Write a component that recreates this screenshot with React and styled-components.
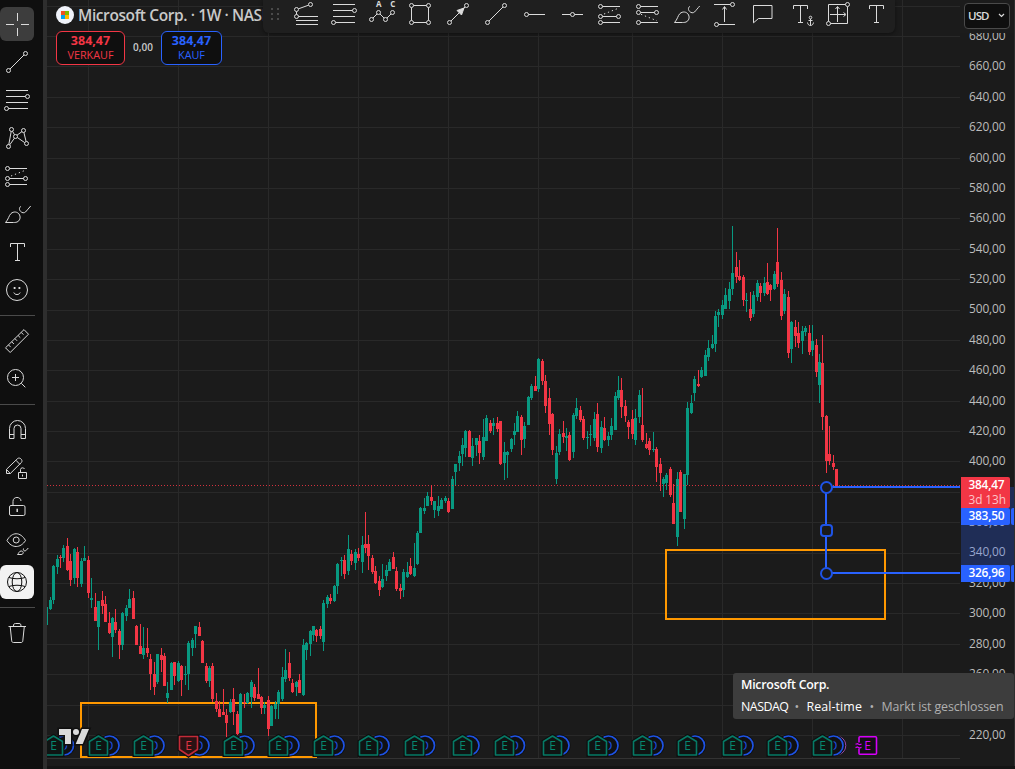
import React from "react";
import styled, { createGlobalStyle } from "styled-components";

const GlobalStyle = createGlobalStyle`
  * {
    box-sizing: border-box;
  }
  body {
    margin: 0;
    background: #1b1b1b;
    overflow: hidden;
    font-family: "Open Sans", "Noto Sans", sans-serif;
  }
`;

const Page = styled.div`
  display: flex;
  width: 1015px;
  height: 769px;
  overflow: hidden;
  background: #1b1b1b;
`;

const Sidebar = styled.div`
  width: 47px;
  flex-shrink: 0;
  padding-top: 7px;
  display: flex;
  flex-direction: column;
  align-items: flex-start;
  gap: 4px;
  background: #0f0f0f;
  border-right: 4px solid #2e2e2e;
`;

const SideButton = styled.div`
  width: 34px;
  height: 34px;
  display: flex;
  align-items: center;
  justify-content: center;
  border-radius: 6px;
  color: ${(p) => (p.$tone === "light" ? "#0f0f0f" : "#dbdbdb")};
  background: ${(p) =>
    p.$tone === "light" ? "#f2f2f2" : p.$tone === "dark" ? "#3d3d3d" : "none"};
`;

const Divider = styled.div`
  width: 35px;
  height: 1px;
  margin: 4px 0;
  background: #4a4a4a;
`;

const Svg = styled.svg`
  display: block;
  width: 28px;
  height: 28px;
  fill: none;
  stroke: currentColor;
  stroke-width: 1;
  overflow: visible;
`;

const ChartPane = styled.div`
  position: relative;
  width: 913px;
  height: 769px;
  flex-shrink: 0;
`;

const ChartSvg = styled.svg`
  position: absolute;
  left: 0;
  top: 0;
  width: 913px;
  height: 769px;
`;

const Legend = styled.div`
  position: relative;
  width: 216px;
  padding: 5px 0 0 9px;
  overflow: hidden;
`;

const TitleRow = styled.div`
  display: flex;
  align-items: center;
  height: 20px;
  gap: 4px;
`;

const LogoSvg = styled.svg`
  width: 18px;
  height: 18px;
  flex-shrink: 0;
`;

const Title = styled.div`
  font-size: 15.5px;
  font-weight: 600;
  letter-spacing: -0.4px;
  white-space: nowrap;
  color: #c9c9c9;
`;

const QuoteRow = styled.div`
  display: flex;
  align-items: center;
  margin-top: 6px;
`;

const QuoteButton = styled.div`
  width: ${(p) => p.$width}px;
  height: 34px;
  padding-top: 1px;
  display: flex;
  flex-direction: column;
  align-items: center;
  border: 1px solid ${(p) => p.$color};
  border-radius: 6px;
  background: #0f0f0f;
  color: ${(p) => p.$color};
`;

const QuotePrice = styled.div`
  font-size: 12.5px;
  line-height: 15px;
  font-weight: 700;
`;

const QuoteSide = styled.div`
  font-size: 10.8px;
  line-height: 14px;
`;

const Spread = styled.div`
  width: 36px;
  padding-bottom: 2px;
  text-align: center;
  font-size: 10px;
  font-weight: 600;
  color: #c9c9c9;
`;

const FloatingBar = styled.div`
  position: absolute;
  left: 216px;
  top: 0;
  width: 632px;
  height: 33px;
  display: flex;
  background: #1f1f1f;
  border-radius: 0 0 6px 6px;
  box-shadow: 0 1px 4px rgba(0, 0, 0, 0.45);
  color: #dbdbdb;
`;

const Grip = styled.div`
  width: 24px;
  padding: 8px 0 0 8px;
  display: grid;
  grid-template-columns: 2px 2px;
  grid-auto-rows: 2px;
  gap: 3px 4px;
`;

const GripDot = styled.div`
  background: #4a4a4a;
`;

const BarButton = styled.div`
  width: 38px;
  height: 28px;
  display: flex;
  justify-content: center;
`;

const Axis = styled.div`
  position: relative;
  width: 55px;
  flex-shrink: 0;
  overflow: hidden;
  border-right: 1px solid #2e2e2e;
`;

const AxisLabels = styled.div`
  display: flex;
  flex-direction: column;
  padding-top: 20px;
`;

const AxisLabel = styled.div`
  height: 30.39px;
  line-height: 30.39px;
  padding-left: 9px;
  flex-shrink: 0;
  font-size: 11.9px;
  letter-spacing: -0.1px;
  color: #bdbdbd;
`;

const Currency = styled.div`
  position: absolute;
  left: 4px;
  top: 3px;
  width: 46px;
  height: 26px;
  padding: 0 4px 1px 3px;
  display: flex;
  align-items: center;
  justify-content: space-between;
  border: 1px solid #4a4a4a;
  border-radius: 4px;
  background: #0f0f0f;
  color: #dbdbdb;
  font-size: 11.5px;
  font-weight: 600;
  letter-spacing: -0.9px;
`;

const AxisMask = styled.div`
  position: absolute;
  left: 0;
  top: 0;
  width: 54px;
  height: 33px;
  background: #1c1c1c;
`;

const RangeShade = styled.div`
  position: absolute;
  left: 1px;
  top: 487px;
  width: 53px;
  height: 95px;
  background: rgba(41, 98, 255, 0.26);
`;

const PriceTag = styled.div`
  position: absolute;
  left: 1px;
  top: ${(p) => p.$top}px;
  width: 49px;
  height: ${(p) => p.$height}px;
  padding-left: 7.5px;
  background: ${(p) => p.$color};
  border-radius: 0 2px 2px 0;
  color: white;
  font-size: 11.9px;
  line-height: 15px;
  letter-spacing: -0.25px;
  font-weight: 600;
`;

const Countdown = styled.div`
  font-weight: 400;
  line-height: 14px;
  letter-spacing: -0.1px;
  color: #fcc3c8;
`;

const TagEdge = styled.div`
  position: absolute;
  left: 51px;
  top: ${(p) => p.$top}px;
  width: 3px;
  height: 17px;
  border-radius: 2px 0 0 2px;
  background: #2962ff;
`;

const Tooltip = styled.div`
  position: absolute;
  left: 733px;
  top: 673px;
  width: 281px;
  height: 46px;
  padding: 1px 8px;
  border-radius: 3px;
  background: #3d3d3d;
  color: white;
  font-size: 12.4px;
  letter-spacing: -0.1px;
  line-height: 22px;
  white-space: nowrap;
`;

const TipRow = styled.div`
  display: flex;
  font-weight: ${(p) => (p.$bold ? 600 : 400)};
  letter-spacing: ${(p) => (p.$bold ? "-0.25px" : "-0.1px")};
`;

const TipPart = styled.span`
  width: ${(p) => p.$width}px;
  color: ${(p) => (p.$muted ? "#b0b0b0" : "white")};
  font-weight: ${(p) => (p.$muted ? 400 : 500)};
  letter-spacing: ${(p) => p.$tracking || "-0.1px"};
`;

const BottomEdge = styled.div`
  position: absolute;
  left: 47px;
  top: 766px;
  width: 968px;
  height: 3px;
  background: #141414;
`;

const O = ({ x, y }) => <circle cx={x} cy={y} r="2" />;

const Glyph = ({ name }) => <Svg viewBox="0 0 28 28">{glyphs[name]}</Svg>;

const glyphs = {
  cross: <path d="M3 14.5h8M18 14.5h8M14.5 3v8M14.5 18v8" />,
  trend: (
    <>
      <path d="M7 21L21 7" />
      <O x={5.5} y={22.5} />
      <O x={22.5} y={5.5} />
    </>
  ),
  fib: (
    <>
      <path d="M3 4.5h22M3 10.5h19.5M3 16.5h22M5.5 22.5H25" />
      <O x={24.5} y={10.5} />
      <O x={3.5} y={22.5} />
    </>
  ),
  pattern: (
    <>
      <path d="M5.8 20.5L8.2 7.5M9.5 7.2l2 3.6M14 11.2l5-3.6M20.9 8.5l2.2 9M21.7 18.6l-7.4-5.1M11.4 14.2L6.7 20.9" />
      <O x={5.5} y={22.5} />
      <O x={8.5} y={5.5} />
      <O x={12.5} y={12.5} />
      <O x={20.5} y={6.5} />
      <O x={23.5} y={19.5} />
    </>
  ),
  long: (
    <>
      <path d="M6.5 6.5H24M6.5 16.5h14M6.5 22.5H24" />
      <path d="M8 14L23 8" strokeDasharray="1.3 2.9" />
      <O x={4.5} y={6.5} />
      <O x={4.5} y={16.5} />
      <O x={4.5} y={22.5} />
      <O x={22.5} y={16.5} />
    </>
  ),
  short: (
    <>
      <path d="M6.5 6.5H24M6.5 12.5h14M6.5 22.5H24" />
      <path d="M7 14.3L23 20.8" strokeDasharray="1.3 2.9" />
      <O x={4.5} y={6.5} />
      <O x={4.5} y={12.5} />
      <O x={4.5} y={22.5} />
      <O x={22.5} y={12.5} />
    </>
  ),
  brush: (
    <>
      <path d="M2.5 22.5C5.5 19.5 5.8 15.6 8 13.5c2.6-2.3 6.3-1.8 8 .5 1.8 2.6 1.3 5.8-1 7.5-1.3.9-3 1-4.5 1z" />
      <path d="M18 6.3c-2.2 1.3-1.8 3.6-.5 5 1.6 1.8 3.7 1.9 5 .7C24 10.5 26 7.8 27.7 6" />
    </>
  ),
  text: <path d="M7.5 9V5.5h14V9M14.5 5.5v17M12 22.5h5" />,
  smile: (
    <>
      <circle cx="14" cy="14" r="10.5" />
      <path d="M10.8 16.5c.6 1.5 1.8 2 3.2 2s2.6-.5 3.2-2" />
      <path d="M10.7 12h1.8M15.5 12h1.8" strokeWidth="1.8" />
    </>
  ),
  ruler: (
    <>
      <path d="M2.5 20.8L21 2.6l4.5 4.6L7.2 25.5z" strokeLinejoin="round" />
      <path d="M5.5 17.9l2.2 2.2M8.7 14.8l2.2 2.2M11.9 11.6l2.2 2.2M15.1 8.5l2.2 2.2M18.2 5.4l2.2 2.2" />
    </>
  ),
  zoom: (
    <>
      <circle cx="12.5" cy="12.5" r="8" />
      <path d="M12.5 9v7M9 12.5h7M18.3 18.3l4 4" />
    </>
  ),
  magnet: (
    <path d="M6.5 22.5v-10a8 8 0 0 1 16 0v10H18v-10a3.5 3.5 0 0 0-7 0v10zM6.5 18.5H11M18 18.5h4.5" />
  ),
  pencilLock: (
    <>
      <path d="M3.5 19.5v-4.2L14.7 4.5c2-1.6 5.6 1.5 3.8 3.9L7.3 19.5zM3.5 15.5l3.8 4M13 6.3l3.8 4" />
      <path d="M15.5 18.5h8v6h-8zM17.5 18.5v-3c0-2 3.5-2.3 4-.5M19.5 20.5v2" />
    </>
  ),
  lock: (
    <>
      <rect x="6.5" y="13.5" width="15.5" height="10" rx="1.5" />
      <path d="M10 13.5V9.3C10 4.2 17.8 4.2 18 9" />
      <path d="M14.2 16.8v3.2" strokeWidth="1.5" />
    </>
  ),
  eye: (
    <>
      <path d="M4 10.500C8.800 1.500 17.500 1.500 22.500 10.500 17.500 18.500 8.800 18.500 4 10.500z" />
      <circle cx="13.2" cy="10" r="3" />
      <path d="M14.5 24.5c1.5-1.3 1.5-3.3 3.5-3.5 3-.2 3 3.5 0 3.5zM20.5 18.5c-.8 2 1.2 3 2.3 2.2l2.5-2.7" />
    </>
  ),
  globe: (
    <>
      <circle cx="14" cy="14" r="9.5" />
      <ellipse cx="14" cy="14" rx="4.8" ry="9.5" />
      <path d="M5.8 9.5c5 1.7 11.4 1.7 16.4 0M5.8 18.5c5-1.7 11.4-1.7 16.4 0" />
    </>
  ),
  trash: (
    <path d="M5.5 7.5H23M10.5 7.5c0-2.5.5-3 2-3H16c1.5 0 2 .5 2 3M7.2 7.5l1.5 14.3c.1 1 .6 1.7 1.6 1.7h7.9c1 0 1.5-.7 1.6-1.7l1.5-14.3" />
  ),
  fork: (
    <>
      <path d="M4.5 14.5v-3M6.5 8.8l10-3.6M6.5 16.5H26M4 20.5h22M4 24.5h22" />
      <O x={4.5} y={16.5} />
      <O x={4.5} y={9.5} />
      <O x={18.5} y={4.5} />
    </>
  ),
  waves: (
    <>
      <path d="M5 18l4-4M12 14l4 4M19 18l4-4" />
      <O x={3.5} y={19.5} />
      <O x={10.5} y={12.5} />
      <O x={17.5} y={19.5} />
      <O x={24.5} y={12.5} />
      <g fill="currentColor" stroke="none" fontSize="8" fontWeight="700" textAnchor="middle">
        <text x="10.8" y="7">A</text>
        <text x="24.8" y="7">C</text>
      </g>
    </>
  ),
  rect: (
    <>
      <path d="M7.5 5.5h13M7.5 22.5h13M5.5 7.5v13M22.5 7.5v13" />
      <O x={5.5} y={5.5} />
      <O x={22.5} y={5.5} />
      <O x={5.5} y={22.5} />
      <O x={22.5} y={22.5} />
    </>
  ),
  arrow: (
    <>
      <path d="M7 21L21 7" />
      <path d="M20 8l-2.5 7-4.5-4.5z" fill="currentColor" />
      <O x={5.5} y={22.5} />
      <O x={22.5} y={5.5} />
    </>
  ),
  ray: (
    <>
      <path d="M8.5 14.5H25" />
      <O x={6.5} y={14.5} />
    </>
  ),
  hline: (
    <>
      <path d="M4 14.5h8.5M16.5 14.5H25" />
      <O x={14.5} y={14.5} />
    </>
  ),
  priceRange: (
    <>
      <path d="M4 4.5h16.5M8.5 24.5H25M14.5 22V7M12.5 9.5l2-3 2 3" />
      <O x={22.5} y={4.5} />
      <O x={6.5} y={24.5} />
    </>
  ),
  comment: <path d="M5.5 5.5H24v13H10.5l-5 4.3z" strokeLinejoin="round" />,
  anchorText: (
    <>
      <path d="M7.5 9V5.5h14V9M14.5 5.5v17M12 22.5h5" />
      <circle cx="24.5" cy="17.5" r="1.3" />
      <path d="M24.5 19v6.5M22.5 20.5h4M21.5 22.5c.3 2 1.5 3 3 3s2.7-1 3-3" />
    </>
  ),
  range: (
    <>
      <path d="M4.5 21.5v-17h17M23.5 6.500v17h-17M13.5 22V7M11.5 9l2-2.5 2 2.5M6 14.5h15M19.5 12.5l2.500 2-2.500 2" />
      <O x={23.5} y={4.5} />
      <O x={4.5} y={23.5} />
    </>
  ),
};

const sideTools = [
  "cross", "trend", "fib", "pattern", "long", "brush", "text", "smile", "-",
  "ruler", "zoom", "-",
  "magnet", "pencilLock", "lock", "eye", "globe", "-",
  "trash",
];

const barTools = [
  "fork", "fib", "waves", "rect", "arrow", "trend", "ray", "hline",
  "long", "short", "brush", "priceRange", "comment", "anchorText", "range", "text",
];

// x, high, body top, body bottom, low, 1 = up week
const candles = [
  [46, 607, 607, 625, 625, 1], [50, 597, 600, 609, 610, 1], [53, 565, 566, 600, 604, 1],
  [57, 555, 559, 567, 574, 1], [60, 555, 557, 558, 568, 0], [63, 545, 548, 558, 562, 1],
  [67, 538, 546, 570, 571, 0], [70, 554, 561, 580, 586, 0], [74, 548, 549, 578, 584, 1],
  [77, 547, 552, 578, 587, 0], [81, 558, 561, 584, 587, 1], [84, 546, 558, 561, 561, 1],
  [88, 556, 560, 593, 598, 0], [91, 578, 598, 600, 608, 1], [95, 593, 607, 621, 621, 0],
  [98, 601, 601, 627, 650, 1], [102, 591, 600, 606, 614, 0], [105, 596, 604, 622, 622, 0],
  [109, 612, 623, 633, 634, 0], [112, 617, 618, 637, 657, 1], [115, 609, 622, 630, 633, 0],
  [119, 629, 631, 645, 659, 0], [122, 612, 613, 645, 650, 1], [126, 605, 608, 616, 621, 1],
  [129, 589, 599, 608, 608, 1], [133, 591, 598, 619, 619, 0], [136, 625, 626, 645, 645, 0],
  [140, 624, 646, 654, 654, 0], [143, 627, 648, 655, 659, 1], [147, 628, 648, 653, 657, 0],
  [150, 654, 659, 674, 690, 0], [154, 662, 674, 687, 695, 0], [157, 654, 654, 682, 684, 1],
  [161, 648, 655, 660, 672, 0], [164, 653, 656, 686, 686, 0], [167, 682, 693, 698, 703, 1],
  [171, 662, 663, 690, 690, 1], [174, 662, 662, 676, 685, 0], [178, 661, 663, 681, 682, 1],
  [181, 665, 666, 680, 696, 0], [185, 666, 674, 675, 685, 1], [188, 641, 643, 674, 690, 1],
  [192, 638, 640, 648, 656, 1], [195, 626, 626, 634, 648, 1], [199, 622, 627, 636, 636, 0],
  [202, 640, 641, 663, 663, 0], [206, 663, 666, 681, 683, 0], [209, 666, 668, 681, 687, 1],
  [212, 663, 666, 699, 702, 0], [216, 693, 701, 709, 712, 0], [219, 701, 709, 717, 717, 0],
  [223, 689, 712, 715, 715, 0], [226, 709, 715, 723, 737, 0], [230, 699, 702, 712, 713, 1],
  [233, 688, 699, 712, 725, 0], [237, 711, 714, 734, 735, 0], [240, 693, 694, 733, 733, 1],
  [244, 694, 702, 703, 708, 0], [247, 692, 693, 703, 704, 1], [251, 680, 682, 697, 708, 1],
  [254, 684, 687, 698, 701, 0], [258, 668, 694, 699, 699, 0], [261, 696, 697, 708, 714, 0],
  [264, 702, 705, 708, 714, 1], [268, 696, 700, 729, 736, 0], [271, 705, 706, 726, 726, 1],
  [275, 701, 704, 709, 719, 1], [278, 690, 692, 704, 719, 1], [282, 667, 677, 699, 701, 1],
  [285, 649, 670, 679, 682, 1], [289, 652, 663, 678, 681, 0], [292, 679, 683, 692, 693, 0],
  [296, 681, 682, 687, 696, 1], [299, 674, 680, 693, 693, 0], [303, 639, 645, 695, 696, 1],
  [306, 642, 643, 650, 660, 1], [310, 630, 631, 644, 656, 1], [313, 626, 626, 635, 641, 1],
  [316, 629, 630, 636, 642, 0], [320, 626, 629, 636, 639, 0], [323, 600, 603, 642, 651, 1],
  [327, 595, 597, 604, 608, 1], [330, 594, 598, 601, 604, 0], [334, 585, 586, 601, 602, 1],
  [337, 563, 564, 586, 594, 1], [341, 557, 560, 561, 576, 1], [344, 555, 560, 574, 579, 0],
  [348, 535, 549, 571, 575, 1], [351, 550, 554, 561, 565, 0], [355, 549, 552, 563, 570, 1],
  [358, 548, 554, 558, 561, 0], [362, 536, 545, 562, 573, 1], [365, 512, 544, 548, 553, 0],
  [368, 535, 544, 556, 570, 0], [372, 555, 558, 572, 574, 0], [375, 566, 571, 583, 584, 0],
  [379, 576, 581, 590, 596, 0], [382, 564, 579, 587, 588, 1], [386, 565, 570, 576, 581, 1],
  [389, 559, 562, 571, 571, 1], [393, 552, 557, 569, 569, 0], [396, 567, 571, 589, 591, 0],
  [400, 584, 588, 591, 599, 0], [403, 569, 572, 590, 597, 1], [407, 562, 572, 577, 578, 1],
  [410, 558, 566, 574, 575, 0], [414, 543, 568, 576, 577, 1], [417, 531, 533, 564, 565, 1],
  [420, 507, 508, 533, 533, 1], [424, 498, 508, 511, 514, 1], [427, 492, 496, 506, 506, 1],
  [431, 485, 497, 501, 505, 0], [434, 501, 501, 510, 518, 1], [438, 496, 506, 511, 516, 1],
  [441, 498, 500, 509, 509, 1], [445, 496, 498, 501, 503, 1], [448, 498, 501, 512, 513, 0],
  [452, 476, 479, 509, 509, 1], [455, 464, 464, 472, 486, 1], [459, 451, 456, 463, 471, 1],
  [462, 438, 445, 454, 466, 1], [465, 430, 431, 448, 457, 1], [469, 430, 431, 457, 457, 0],
  [472, 438, 446, 458, 466, 1], [476, 438, 438, 445, 456, 1], [479, 435, 441, 453, 464, 0],
  [483, 419, 437, 457, 460, 1], [486, 415, 418, 441, 441, 1], [490, 420, 423, 431, 433, 0],
  [493, 418, 423, 426, 435, 1], [497, 417, 423, 429, 432, 0], [500, 421, 421, 464, 465, 0],
  [504, 442, 452, 463, 480, 1], [507, 451, 452, 455, 478, 1], [511, 438, 439, 449, 452, 1],
  [514, 423, 431, 435, 445, 1], [517, 411, 416, 432, 432, 1], [521, 415, 417, 440, 455, 0],
  [524, 422, 426, 439, 448, 1], [528, 396, 397, 425, 425, 1], [531, 384, 386, 398, 400, 1],
  [535, 376, 386, 391, 391, 0], [538, 358, 359, 389, 392, 1], [542, 359, 361, 381, 385, 0],
  [545, 375, 381, 406, 413, 0], [549, 388, 398, 424, 435, 0], [552, 413, 414, 450, 455, 0],
  [556, 446, 453, 479, 484, 1], [559, 429, 434, 452, 455, 1], [563, 421, 433, 437, 443, 0],
  [566, 428, 436, 438, 451, 1], [569, 432, 435, 460, 461, 0], [573, 413, 415, 452, 458, 1],
  [576, 398, 408, 416, 419, 1], [580, 406, 410, 420, 422, 0], [583, 416, 419, 438, 440, 0],
  [587, 431, 437, 438, 449, 1], [590, 425, 434, 435, 446, 1], [594, 412, 419, 438, 441, 1],
  [597, 403, 414, 447, 452, 0], [601, 421, 427, 448, 453, 1], [604, 417, 428, 440, 441, 0],
  [608, 432, 436, 440, 446, 1], [611, 418, 426, 435, 440, 1], [615, 392, 396, 430, 430, 1],
  [618, 376, 390, 398, 400, 1], [621, 378, 390, 407, 418, 0], [625, 400, 406, 416, 422, 0],
  [628, 420, 422, 427, 439, 0], [632, 410, 419, 434, 439, 0], [635, 409, 418, 440, 445, 1],
  [639, 390, 395, 417, 423, 1], [642, 388, 425, 440, 442, 0], [646, 433, 444, 448, 449, 0],
  [649, 438, 441, 450, 455, 0], [653, 432, 449, 450, 452, 1], [656, 447, 449, 467, 482, 0],
  [660, 458, 464, 473, 491, 0], [663, 477, 479, 484, 497, 1], [666, 473, 475, 483, 490, 1],
  [670, 467, 469, 495, 497, 0], [673, 484, 503, 524, 524, 0], [677, 472, 479, 537, 546, 1],
  [680, 470, 472, 512, 512, 0], [684, 474, 474, 519, 529, 1], [687, 402, 408, 475, 485, 1],
  [691, 395, 403, 413, 414, 1], [694, 376, 379, 393, 401, 1], [698, 370, 384, 386, 387, 0],
  [701, 367, 370, 377, 378, 1], [705, 350, 355, 376, 376, 1], [708, 340, 348, 357, 361, 1],
  [712, 335, 344, 348, 349, 1], [715, 311, 316, 344, 352, 1], [718, 309, 312, 315, 327, 1],
  [722, 300, 305, 315, 319, 1], [725, 288, 295, 309, 309, 1], [729, 282, 289, 301, 309, 1],
  [732, 226, 273, 289, 295, 1], [736, 252, 267, 277, 283, 0], [739, 260, 276, 280, 281, 0],
  [743, 275, 277, 300, 306, 0], [746, 293, 300, 301, 312, 1], [750, 292, 309, 318, 321, 0],
  [753, 291, 295, 314, 317, 1], [757, 280, 283, 297, 301, 1], [760, 283, 286, 293, 302, 0],
  [764, 277, 283, 293, 296, 1], [767, 263, 282, 294, 295, 0], [770, 284, 285, 290, 301, 0],
  [774, 271, 274, 289, 290, 1], [777, 228, 262, 284, 287, 0], [781, 272, 280, 316, 320, 0],
  [784, 289, 294, 311, 314, 1], [788, 291, 297, 353, 358, 0], [791, 321, 322, 349, 363, 1],
  [795, 320, 327, 336, 347, 0], [798, 322, 333, 343, 348, 0], [802, 326, 331, 341, 354, 1],
  [805, 326, 328, 332, 336, 1], [809, 325, 333, 352, 355, 0], [812, 325, 341, 350, 356, 1],
  [816, 339, 345, 372, 377, 0], [819, 354, 362, 385, 403, 1], [822, 335, 363, 417, 430, 0],
  [826, 415, 416, 461, 473, 0], [829, 426, 454, 461, 465, 0], [833, 455, 463, 467, 470, 0],
  [836, 469, 469, 486, 486, 0],
];

// earnings centre, dividend offset
const events = [
  [53.5, 10.5], [98.5, 11], [143.5, 11], [188.5, 11], [233.5, 11], [278.5, 11],
  [323.5, 11], [368.5, 11], [414.5, 10.5], [462.5, 7], [504.5, 10.5], [552.5, 7],
  [597.5, 11], [642.5, 11], [687.5, 7.5], [732.5, 11], [777.5, 11], [822.5, 11],
];

const gridX = [88, 178, 268, 358, 448, 538, 632, 722, 812, 902];
const gridY = Array.from({ length: 25 }, (_, i) => Math.round(735 - i * 30.39));
const prices = Array.from({ length: 24 }, (_, i) => `${680 - i * 20},00`);

const EventMark = ({ x, offset, missed, special }) => {
  const shape = missed ? "M-9-9H9V4L0 10-9 4z" : "M-9 9.5V-4L0-9.5 9-4V9.5z";
  return (
    <g transform={`translate(${x} 745.5)`} fontSize="12" textAnchor="middle">
      {special && <circle cx={offset + 2.8} r="9.5" fill="#0f0f0f" stroke="#9c4bb0" />}
      <circle cx={offset} r="11" fill="#0f0f0f" />
      <circle cx={offset} r="9.5" fill="#101014" stroke="#1e53e5" strokeWidth="1.7" />
      <text x={offset - 0.5} y="4.3" fill="#1e53e5">D</text>
      <path d={shape} fill="#0f0f0f" stroke="#0f0f0f" strokeWidth="4" />
      <path
        d={shape}
        fill={missed ? "#2b1214" : "#0f1413"}
        stroke={missed ? "#c32b38" : "#067a66"}
        strokeWidth="1.6"
        strokeLinejoin="round"
      />
      <text y="4.5" fill={missed ? "#e03543" : "#078770"}>E</text>
    </g>
  );
};

const Chart = () => (
  <ChartSvg viewBox="47 0 913 769">
    <g fill="#292929" shapeRendering="crispEdges">
      {gridX.map((x) => (
        <rect key={x} x={x} y="0" width="1" height="758" />
      ))}
      {gridY.map((y) => (
        <rect key={y} x="47" y={y} width="913" height="1" />
      ))}
      <rect x="47" y="758" width="913" height="1" fill="#333" />
    </g>
    <g fill="none" stroke="#ff9800" strokeWidth="2">
      <rect x="81" y="703" width="235" height="54" />
      <rect x="666" y="550" width="219" height="69" />
    </g>
    <g shapeRendering="crispEdges">
      {candles.map(([x, high, top, bottom, low, up]) => (
        <g key={x} fill={up ? "#089981" : "#f23645"}>
          <rect x={x} y={high} width="1" height={low - high} />
          <rect x={x - 1} y={top} width="3" height={bottom - top} />
        </g>
      ))}
    </g>
    <path d="M47 485.5H960" stroke="#f23645" strokeDasharray="1 2" opacity="0.85" />
    {events.map(([x, offset], i) => (
      <EventMark key={x} x={x} offset={offset} missed={i === 3} special={i === 17} />
    ))}
    <g stroke="#d500f9" strokeWidth="1.6" fill="#130f14">
      <rect x="859" y="736.8" width="17.5" height="17.5" rx="1" />
      <path d="M858.5 742.5v6" stroke="#130f14" strokeWidth="3" />
      <path d="M855.5 744.3l2-.6 2 1 2-.6M855.5 747.6l2-.6 2 1 2-.6" strokeWidth="1.2" />
      <text x="867.5" y="750" fill="#d500f9" stroke="none" fontSize="12" textAnchor="middle">
        E
      </text>
    </g>
    <g fill="#dbdbdb" stroke="#0f0f0f" strokeWidth="3" paintOrder="stroke">
      <path d="M59 729h12v15h-6v-9h-6z" />
      <path d="M82 729h7l-6.3 15h-7z" />
      <circle cx="76" cy="732" r="3" />
    </g>
    <g stroke="#2962ff" strokeWidth="2" fill="#1b1b1b">
      <path d="M826 487V573M826 487H960M826 573H960" />
      <g stroke="#1e53e5">
        <circle cx="826.5" cy="487.5" r="5.5" />
        <rect x="821" y="525" width="11" height="11" rx="3" />
        <circle cx="826.5" cy="573.5" r="5.5" />
      </g>
    </g>
  </ChartSvg>
);

const toneOf = (name) => {
  if (name === "cross") return "dark";
  if (name === "globe") return "light";
  return undefined;
};

const App = () => {
  return (
    <>
      <GlobalStyle />
      <Page>
        <Sidebar>
          {sideTools.map((name, i) =>
            name === "-" ? (
              <Divider key={i} />
            ) : (
              <SideButton key={i} $tone={toneOf(name)}>
                <Glyph name={name} />
              </SideButton>
            )
          )}
        </Sidebar>

        <ChartPane>
          <Chart />
          <Legend>
            <TitleRow>
              <LogoSvg viewBox="0 0 18 18">
                <circle cx="9" cy="9" r="9" fill="#f0f3fa" />
                <path d="M5 5h4v4H5z" fill="#f25022" />
                <path d="M9 5h4v4H9z" fill="#7fba00" />
                <path d="M5 9h4v4H5z" fill="#00a4ef" />
                <path d="M9 9h4v4H9z" fill="#ffb900" />
              </LogoSvg>
              <Title>Microsoft Corp. · 1W · NASDAQ</Title>
            </TitleRow>
            <QuoteRow>
              <QuoteButton $width={69} $color="#f23645">
                <QuotePrice>384,47</QuotePrice>
                <QuoteSide>VERKAUF</QuoteSide>
              </QuoteButton>
              <Spread>0,00</Spread>
              <QuoteButton $width={61} $color="#2962ff">
                <QuotePrice>384,47</QuotePrice>
                <QuoteSide>KAUF</QuoteSide>
              </QuoteButton>
            </QuoteRow>
          </Legend>
          <FloatingBar>
            <Grip>
              {[0, 1, 2, 3, 4, 5].map((n) => (
                <GripDot key={n} />
              ))}
            </Grip>
            {barTools.map((name) => (
              <BarButton key={name}>
                <Glyph name={name} />
              </BarButton>
            ))}
          </FloatingBar>
        </ChartPane>

        <Axis>
          <AxisLabels>
            {prices.map((price) => (
              <AxisLabel key={price}>{price}</AxisLabel>
            ))}
          </AxisLabels>
          <AxisMask />
          <Currency>
            USD
            <svg width="7" height="5" fill="none" stroke="#dbdbdb" strokeWidth="1.2">
              <path d="M1 1l2.5 2.5L6 1" />
            </svg>
          </Currency>
          <RangeShade />
          <PriceTag $top={477} $height={31} $color="#f23645">
            384,47
            <Countdown>3d 13h</Countdown>
          </PriceTag>
          <PriceTag $top={508} $height={17} $color="#2962ff">383,50</PriceTag>
          <TagEdge $top={508} />
          <PriceTag $top={565} $height={17} $color="#2962ff">326,96</PriceTag>
          <TagEdge $top={565} />
        </Axis>

        <BottomEdge />
        <Tooltip>
          <TipRow $bold>Microsoft Corp.</TipRow>
          <TipRow>
            <TipPart $width={53.5} $tracking="-0.5px">NASDAQ</TipPart>
            <TipPart $width={12} $muted>•</TipPart>
            <TipPart $width={63} $tracking="0.1px">Real-time</TipPart>
            <TipPart $width={12} $muted>•</TipPart>
            <TipPart $width={124} $muted>Markt ist geschlossen</TipPart>
          </TipRow>
        </Tooltip>
      </Page>
    </>
  );
};

export default App;
